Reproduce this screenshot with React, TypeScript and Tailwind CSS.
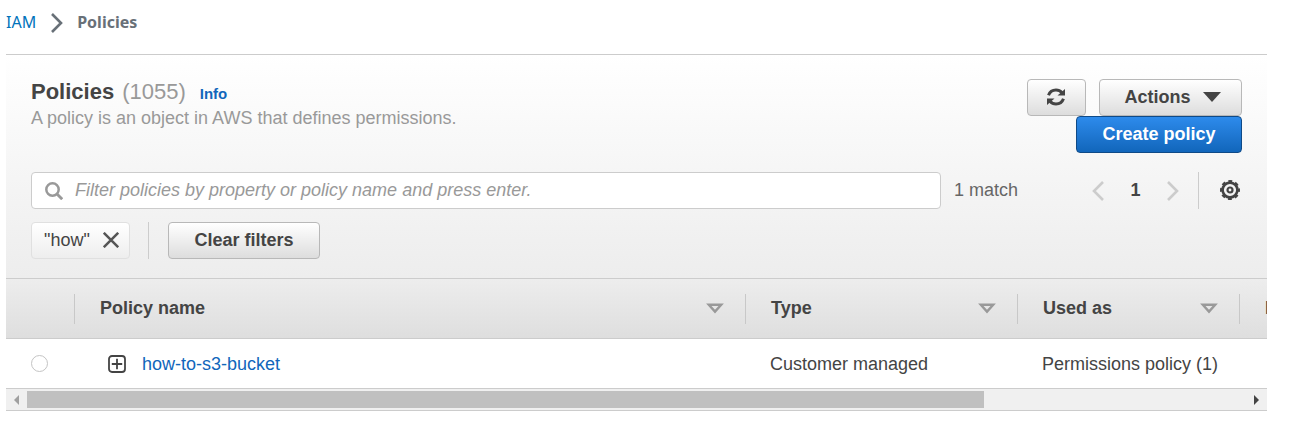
import React from "react";

const grayButton =
  "flex h-[37px] items-center justify-center rounded border border-[#b8b8b8] bg-linear-to-b from-white to-[#dddddd] pb-0.5 font-bold text-[#444444]";

function Chevron({ className, direction = "right" }: { className: string; direction?: "left" | "right" }) {
  return (
    <svg viewBox="0 0 12 20" className={className} fill="none" stroke="currentColor" strokeWidth="2.6" aria-hidden="true">
      <path d={direction === "right" ? "M1 1l9 9-9 9" : "M11 1l-9 9 9 9"} />
    </svg>
  );
}

function RefreshIcon() {
  return (
    <svg viewBox="0 0 18 18" className="size-[18px]" fill="none" aria-hidden="true">
      <path d="M1.500 7.300C2.800 3.800 5.600 2.100 9 2.100c2.600 0 4.500 1 6 2.700" stroke="currentColor" strokeWidth="3" />
      <path d="M18 1v6.500h-7.500z" fill="currentColor" />
      <path d="M16.500 10.700C15.200 14.200 12.400 15.900 9 15.900c-2.600 0-4.500-1-6-2.700" stroke="currentColor" strokeWidth="3" />
      <path d="M0 17v-6.500h7.500z" fill="currentColor" />
    </svg>
  );
}

function GearIcon() {
  return (
    <svg viewBox="0 0 20 20" className="size-5" fill="none" stroke="currentColor" aria-hidden="true">
      <circle cx="10" cy="10" r="7.400" strokeWidth="2.600" />
      <circle cx="10" cy="10" r="9" strokeWidth="2" strokeDasharray="3.900 3.169" strokeDashoffset="1.950" />
      <circle cx="10" cy="10" r="2.500" strokeWidth="2.200" />
    </svg>
  );
}

function SearchIcon() {
  return (
    <svg viewBox="0 0 18 18" className="size-[18px] shrink-0 text-[#999999]" fill="none" stroke="currentColor" aria-hidden="true">
      <circle cx="7.500" cy="7.500" r="6.200" strokeWidth="2.500" />
      <path d="M12 12l5.200 5.200" strokeWidth="2.900" />
    </svg>
  );
}

function HeaderCell({ label, last = false }: { label: string; last?: boolean }) {
  return (
    <th scope="col" className="border-b border-[#cccccc] p-0 text-left font-bold">
      <div className={`flex h-[30px] items-center justify-between pl-[25px] pr-[21px] ${last ? "" : "border-r border-[#c8c8c8]"}`}>
        <span className="pb-0.5">{label}</span>
        <button type="button" aria-label={`Sort by ${label}`} className="text-[#999999]">
          <svg viewBox="0 0 18 11" className="h-[11px] w-[18px]" fill="none" stroke="currentColor" strokeWidth="2.400" aria-hidden="true">
            <path d="M2.800 1.700h12.400L9 8.600z" />
          </svg>
        </button>
      </div>
    </th>
  );
}

export default function App() {
  return (
    <div className="bg-white pl-1.5 pr-7 font-['Liberation_Sans',Arial,sans-serif] text-lg leading-6 text-[#444444]">
      <nav aria-label="Breadcrumb" className="flex h-[54px] items-start pt-2.5 font-['Noto_Sans',sans-serif] text-base leading-6 text-[#687078]">
        <a href="#iam" className="text-[#0073bb]">IAM</a>
        <Chevron className="ml-[15px] mr-3.5 mt-[3px] h-5 w-3" />
        <span className="font-bold">Policies</span>
      </nav>

      <main className="border-t border-[#cccccc]">
        <section className="bg-linear-to-b from-white to-[#ededed] px-[25px] pb-[19px] pt-6">
          <header className="flex items-start justify-between">
            <div>
              <h1 className="flex items-baseline text-[22px] leading-[26px] font-bold">
                Policies
                <span className="ml-2 font-normal text-[#999999]">(1055)</span>
                <a href="#info" className="ml-3.5 text-[15px] text-[#1166bb]">Info</a>
              </h1>
              <p className="leading-[22px] text-[#999999]">A policy is an object in AWS that defines permissions.</p>
            </div>
            <div className="flex flex-col items-end">
              <div className="flex gap-[13px]">
                <button type="button" aria-label="Refresh" className={`${grayButton} w-[59px] pr-0.5`}>
                  <RefreshIcon />
                </button>
                <button type="button" className={`${grayButton} w-[143px] gap-3 pl-1`}>
                  Actions
                  <svg viewBox="0 0 18 10" className="h-2.5 w-[18px]" fill="currentColor" aria-hidden="true">
                    <path d="M0 0h18L9 10z" />
                  </svg>
                </button>
              </div>
              <button
                type="button"
                className="h-[37px] w-[166px] rounded border border-[#0f4a87] bg-linear-to-b from-[#2d8bec] to-[#1166bb] pb-0.5 font-bold text-white"
              >
                Create policy
              </button>
            </div>
          </header>

          <div className="mt-[19px] flex items-center">
            <label className="flex h-[37px] flex-1 items-center rounded border border-[#cccccc] bg-white pl-[13px]">
              <SearchIcon />
              <input
                type="search"
                aria-label="Filter policies"
                placeholder="Filter policies by property or policy name and press enter."
                className="ml-3 h-[35px] w-full bg-transparent pb-px italic outline-none placeholder:text-[#999999]"
              />
            </label>
            <span className="ml-[13px] w-[138px] pb-0.5 text-[#666666]">1 match</span>
            <button type="button" aria-label="Previous page" className="text-[#cccccc]">
              <Chevron direction="left" className="h-5 w-3" />
            </button>
            <span className="w-[63px] pb-0.5 text-center font-bold">1</span>
            <button type="button" aria-label="Next page" className="text-[#cccccc]">
              <Chevron className="h-5 w-3" />
            </button>
            <div className="ml-[19px] flex h-[37px] items-center border-l border-[#cccccc] pb-0.5 pl-[21px]">
              <button type="button" aria-label="Preferences" className="mr-0.5">
                <GearIcon />
              </button>
            </div>
          </div>

          <div className="mt-[13px] flex items-center">
            <div className="flex h-[37px] w-[99px] items-center justify-between rounded border border-[#e0e0e0] bg-linear-to-b from-white to-[#eeeeee] pb-0.5 pl-3 pr-2.5">
              <span>"how"</span>
              <button type="button" aria-label="Remove filter" className="text-[#555555]">
                <svg viewBox="0 0 16 16" className="size-4" fill="none" stroke="currentColor" strokeWidth="2.500" aria-hidden="true">
                  <path d="M.8.8l14.400 14.400M15.200.8L.8 15.200" />
                </svg>
              </button>
            </div>
            <div className="ml-[18px] border-l border-[#cccccc] pl-[19px]">
              <button type="button" className={`${grayButton} w-[152px]`}>Clear filters</button>
            </div>
          </div>
        </section>

        <div className="overflow-hidden border-y border-[#cccccc]">
          <table className="w-[128%] table-fixed border-separate border-spacing-0">
            <colgroup>
              <col className="w-[69px]" />
              <col className="w-[671px]" />
              <col className="w-[272px]" />
              <col className="w-[222px]" />
              <col />
            </colgroup>
            <thead>
              <tr className="h-[60px] bg-linear-to-b from-[#ededed] to-[#dedede]">
                <th scope="col" aria-label="Selection" className="border-b border-[#cccccc] p-0">
                  <div className="h-[30px] border-r border-[#c8c8c8]" />
                </th>
                <HeaderCell label="Policy name" />
                <HeaderCell label="Type" />
                <HeaderCell label="Used as" />
                <HeaderCell label="Description" last />
              </tr>
            </thead>
            <tbody>
              <tr className="h-[49px] bg-white">
                <td className="p-0 pl-[25px]">
                  <input
                    type="radio"
                    name="policy"
                    aria-label="Select how-to-s3-bucket"
                    className="block size-[17px] appearance-none rounded-full border border-[#c4c4c4] bg-white"
                  />
                </td>
                <td className="p-0 pl-[33px]">
                  <div className="flex items-center gap-4">
                    <button type="button" aria-label="Expand how-to-s3-bucket">
                      <svg viewBox="0 0 18 18" className="size-[18px]" fill="none" stroke="currentColor" aria-hidden="true">
                        <rect x="1" y="1" width="16" height="16" rx="3" strokeWidth="1.800" />
                        <path d="M9 3.800v10.400M3.800 9h10.400" strokeWidth="1.800" />
                      </svg>
                    </button>
                    <a href="#how-to-s3-bucket" className="text-[#1166bb]">how-to-s3-bucket</a>
                  </div>
                </td>
                <td className="p-0 pl-6">Customer managed</td>
                <td className="p-0 pl-6">Permissions policy (1)</td>
                <td className="p-0" />
              </tr>
            </tbody>
          </table>
        </div>

        <div className="flex h-[22px] items-center border-b border-[#cccccc] bg-[#f0f0f0]">
          <button type="button" aria-label="Scroll left" className="flex w-[21px] justify-center text-[#a0a0a0]">
            <svg viewBox="0 0 5 10" className="h-2.5 w-[5px]" fill="currentColor" aria-hidden="true">
              <path d="M5 0v10L0 5z" />
            </svg>
          </button>
          <div className="flex-1">
            <div className="h-[17px] w-[78.5%] bg-[#c0c0c0]" />
          </div>
          <button type="button" aria-label="Scroll right" className="flex w-[21px] justify-center text-[#444444]">
            <svg viewBox="0 0 5 10" className="h-2.5 w-[5px]" fill="currentColor" aria-hidden="true">
              <path d="M0 0v10l5-5z" />
            </svg>
          </button>
        </div>
      </main>
    </div>
  );
}
